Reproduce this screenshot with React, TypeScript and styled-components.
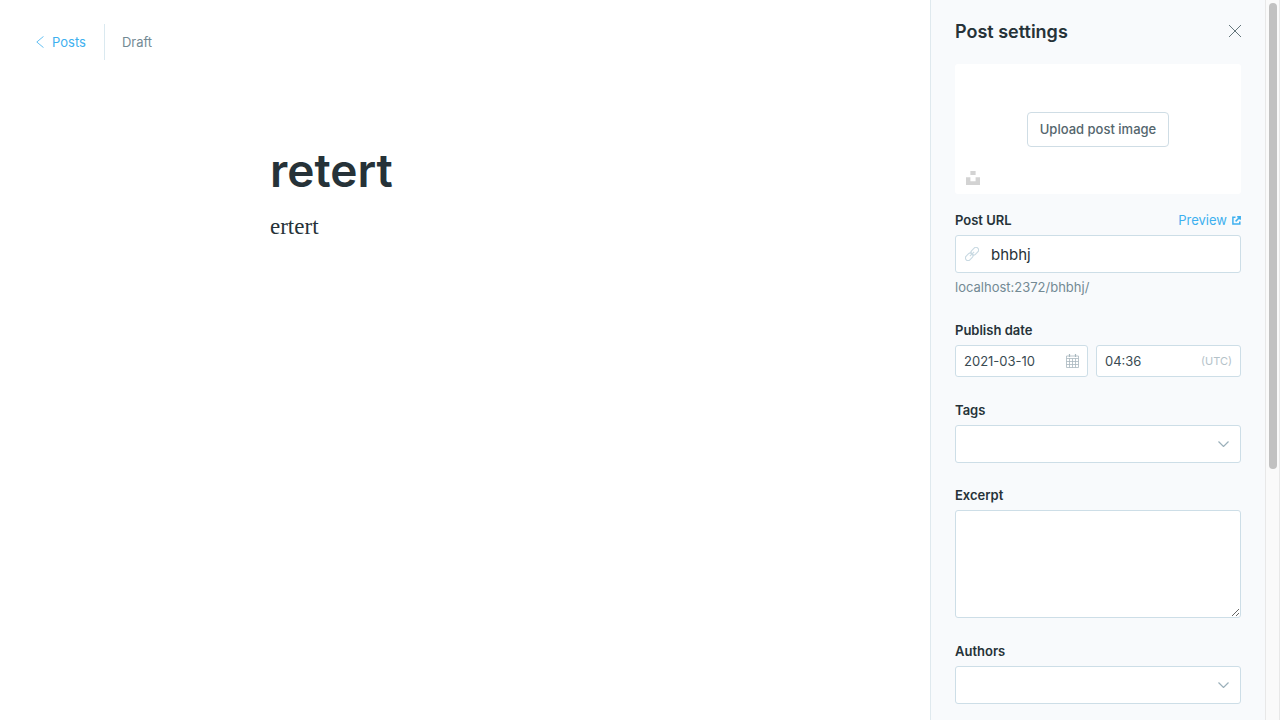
import React from "react";
import styled, { createGlobalStyle } from "styled-components";

const sans = `Inter, "Liberation Sans", sans-serif`;

const GlobalStyle = createGlobalStyle`
  *, *::before, *::after { box-sizing: border-box; }
  html, body, #root { height: 100%; }
  body {
    margin: 0;
    overflow: hidden;
    background: #fff;
    color: #15171a;
    font-family: ${sans};
    font-size: 13px;
    line-height: 16px;
  }
`;

const Page = styled.div`
  display: flex;
  height: 100%;
`;

const Editor = styled.main`
  flex: 1;
  min-width: 0;
  overflow-y: auto;
  scrollbar-width: none;
`;

const TopBar = styled.header`
  display: flex;
  align-items: center;
  height: 36px;
  margin: 24px 36px 0;
`;

const BackLink = styled.a`
  display: flex;
  align-items: center;
  gap: 8px;
  height: 100%;
  padding-right: 18px;
  border-right: 1px solid #dae9f0;
  color: #3eb0ef;
  font-size: 13px;
  text-decoration: none;
`;

const Status = styled.span`
  padding-left: 17px;
  color: #738a94;
`;

const Article = styled.article`
  max-width: 740px;
  margin-top: 83px;
  margin-left: max(24px, calc((100vw - 740px) / 2));
`;

const Title = styled.h1`
  margin: 0;
  color: #263238;
  font-size: 46px;
  font-weight: 600;
  line-height: 54px;
`;

const Body = styled.p`
  margin: 14px 0 0;
  color: #263238;
  font-family: Georgia, "Liberation Serif", serif;
  font-size: 23px;
  line-height: 32px;
`;

const Panel = styled.aside`
  display: flex;
  flex: none;
  width: 350px;
  border-left: 1px solid #dfe9ee;
  background: #f8fafc;
`;

const PanelContent = styled.div`
  flex: 1;
  min-width: 0;
  padding: 20px 24px 0;
  overflow-y: auto;
  scrollbar-width: none;
`;

const ScrollTrack = styled.div`
  flex: none;
  width: 15px;
  padding: 3px 2px 3px 3px;
  border: solid #e8e8e8;
  border-width: 0 1px;
  background: #fafafa;
`;

const ScrollThumb = styled.div`
  height: calc(65% + 2px);
  border-radius: 4px;
  background: #c1c1c1;
`;

const PanelHeader = styled.div`
  display: flex;
  align-items: flex-start;
  justify-content: space-between;
  height: 24px;
  margin-bottom: 20px;
`;

const PanelTitle = styled.h2`
  margin: 0;
  color: #263238;
  font-size: 18px;
  font-weight: 600;
  line-height: 24px;
`;

const IconButton = styled.button`
  display: flex;
  padding: 0;
  border: 0;
  background: none;
  color: #54666d;
  cursor: pointer;
`;

const CloseButton = styled(IconButton)`
  padding: 5px 0;
`;

const ImageBox = styled.div`
  position: relative;
  display: flex;
  align-items: center;
  justify-content: center;
  height: 130px;
  margin-bottom: 18px;
  border-radius: 3px;
  background: #fff;
`;

const UploadButton = styled.button`
  height: 35px;
  padding: 0 12px;
  border: 1px solid #cfdde5;
  border-radius: 4px;
  background: #fff;
  color: #54666d;
  font-family: ${sans};
  font-size: 13px;
  font-weight: 500;
  cursor: pointer;
`;

const UnsplashButton = styled(IconButton)`
  position: absolute;
  left: 11px;
  bottom: 9px;
  color: #d3d3d3;
`;

const Field = styled.div`
  margin-bottom: 25px;
`;

const SelectField = styled(Field)`
  margin-bottom: 24px;
`;

const LabelRow = styled.div`
  display: flex;
  align-items: center;
  justify-content: space-between;
  margin-bottom: 7px;
`;

const Label = styled.label`
  color: #263238;
  font-size: 13px;
  font-weight: 600;
`;

const PreviewLink = styled.a`
  display: flex;
  align-items: center;
  gap: 5px;
  color: #3eb0ef;
  text-decoration: none;
`;

const Control = styled.div<{ $height: number }>`
  display: flex;
  align-items: center;
  min-width: 0;
  height: ${(p) => p.$height}px;
  padding: 0 8px;
  border: 1px solid #cddee7;
  border-radius: 3px;
  background: #fff;
  color: #a9b8bf;
`;

const TextInput = styled.input<{ $large?: boolean }>`
  flex: 1;
  min-width: 0;
  padding: 0;
  border: 0;
  outline: 0;
  background: none;
  color: ${(p) => (p.$large ? "#263238" : "#394a52")};
  font-family: ${sans};
  font-size: ${(p) => (p.$large ? 15 : 13)}px;
`;

const LinkIcon = styled.svg`
  flex: none;
  margin: 0 12px 0 1px;
  color: #c8d9e2;
`;

const Zone = styled.span`
  color: #b4c2c9;
  font-size: 11px;
`;

const Hint = styled.p`
  margin: 4px 0 0;
  color: #738a94;
  line-height: 20px;
`;

const DateRow = styled.div`
  display: grid;
  grid-template-columns: 133fr 145fr;
  gap: 8px;
`;

const SelectBox = styled.div`
  display: grid;
  align-items: center;

  > * {
    grid-area: 1 / 1;
  }

  > svg {
    justify-self: end;
    margin-right: 12px;
    pointer-events: none;
  }
`;

const Select = styled.select`
  width: 100%;
  height: 38px;
  padding: 0 32px 0 8px;
  border: 1px solid #cddee7;
  border-radius: 3px;
  appearance: none;
  background: #fff;
  font-family: ${sans};
`;

const TextArea = styled.textarea`
  display: block;
  width: 100%;
  height: 108px;
  padding: 8px;
  border: 1px solid #cddee7;
  border-radius: 3px;
  background: #fff;
  font-family: ${sans};
  font-size: 15px;
  resize: vertical;
`;

const Chevron = () => (
  <svg width="11" height="6" viewBox="0 0 11 6" fill="none" stroke="#9bb0ba" strokeWidth="1.2">
    <path d="M.5.5l5 5 5-5" />
  </svg>
);

function SelectControl({ id, label }: { id: string; label: string }) {
  return (
    <SelectField>
      <LabelRow>
        <Label htmlFor={id}>{label}</Label>
      </LabelRow>
      <SelectBox>
        <Select id={id} defaultValue="">
          <option value="" />
        </Select>
        <Chevron />
      </SelectBox>
    </SelectField>
  );
}

export default function App() {
  return (
    <Page>
      <GlobalStyle />
      <Editor>
        <TopBar>
          <BackLink href="#posts">
            <svg width="8" height="12" viewBox="0 0 8 12" fill="none" stroke="currentColor" strokeWidth=".8">
              <path d="M7.5.4L.8 6l6.7 5.6" />
            </svg>
            Posts
          </BackLink>
          <Status>Draft</Status>
        </TopBar>
        <Article>
          <Title>retert</Title>
          <Body>ertert</Body>
        </Article>
      </Editor>
      <Panel>
        <PanelContent>
          <PanelHeader>
            <PanelTitle>Post settings</PanelTitle>
            <CloseButton type="button" aria-label="Close">
              <svg width="12" height="12" viewBox="0 0 12 12" stroke="currentColor" strokeWidth=".9">
                <path d="M0 0l12 12M12 0L0 12" />
              </svg>
            </CloseButton>
          </PanelHeader>
          <ImageBox>
            <UploadButton type="button">Upload post image</UploadButton>
            <UnsplashButton type="button" aria-label="Unsplash">
              <svg width="14" height="14" viewBox="0 0 14 14" fill="currentColor">
                <path d="M4.4 0h5.2v4H4.400zM0 6.200h4.400v4h5.200v-4H14V14H0z" />
              </svg>
            </UnsplashButton>
          </ImageBox>
          <Field>
            <LabelRow>
              <Label htmlFor="url">Post URL</Label>
              <PreviewLink href="#preview">
                Preview
                <svg width="9" height="9" viewBox="0 0 9 9" fill="none" stroke="currentColor" strokeWidth="1.5">
                  <path d="M3.500 1.200H.9v6.900h6.900V5.500M3.600 5.400L7.500 1.500M5.200.8h3v3" />
                </svg>
              </PreviewLink>
            </LabelRow>
            <Control $height={38}>
              <LinkIcon width="14" height="14" viewBox="0 0 14 14" fill="none" stroke="currentColor" strokeWidth="1.1">
                <g transform="rotate(-45 7 7)">
                  <rect x="-1.200" y="4.400" width="8.600" height="5.200" rx="2.600" />
                  <rect x="6.600" y="4.400" width="8.600" height="5.200" rx="2.600" />
                  <path d="M4 7h6" />
                </g>
              </LinkIcon>
              <TextInput id="url" $large defaultValue="bhbhj" />
            </Control>
            <Hint>localhost:2372/bhbhj/</Hint>
          </Field>
          <Field>
            <LabelRow>
              <Label htmlFor="date">Publish date</Label>
            </LabelRow>
            <DateRow>
              <Control $height={32}>
                <TextInput id="date" defaultValue="2021-03-10" />
                <svg width="13" height="14" viewBox="0 0 13 14" fill="none" stroke="currentColor" strokeWidth=".8">
                  <path d="M.5 2h12v11.500H.5zM.5 4.500h12M.5 7.500h12M.5 10.500h12M3.500 4.500v9M6.500 4.500v9M9.500 4.500v9" />
                  <path d="M3.500 0v3M9.500 0v3" strokeWidth="1.2" />
                </svg>
              </Control>
              <Control $height={32}>
                <TextInput aria-label="Publish time" defaultValue="04:36" />
                <Zone>(UTC)</Zone>
              </Control>
            </DateRow>
          </Field>
          <SelectControl id="tags" label="Tags" />
          <Field>
            <LabelRow>
              <Label htmlFor="excerpt">Excerpt</Label>
            </LabelRow>
            <TextArea id="excerpt" />
          </Field>
          <SelectControl id="authors" label="Authors" />
        </PanelContent>
        <ScrollTrack>
          <ScrollThumb />
        </ScrollTrack>
      </Panel>
    </Page>
  );
}
